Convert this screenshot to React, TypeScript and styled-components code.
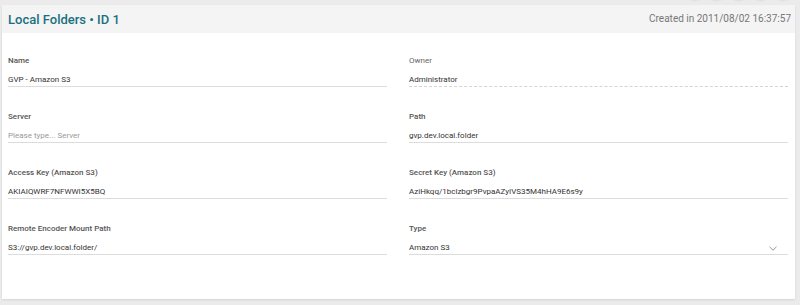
import { FC } from 'react'
import styled, { createGlobalStyle } from 'styled-components'

const GlobalStyle = createGlobalStyle`
  html, body {
    margin: 0;
    padding: 0;
    background: #ebebeb;
    font-family: Roboto, "Liberation Sans", sans-serif;
  }
`

type Field = {
  label: string
  value: string
  readOnly?: boolean
  placeholder?: boolean
  select?: boolean
}

const fields: Field[] = [
  { label: 'Name', value: 'GVP - Amazon S3' },
  { label: 'Owner', value: 'Administrator', readOnly: true },
  { label: 'Server', value: 'Please type... Server', placeholder: true },
  { label: 'Path', value: 'gvp.dev.local.folder' },
  { label: 'Access Key (Amazon S3)', value: 'AKIAIQWRF7NFWWI5X5BQ' },
  { label: 'Secret Key (Amazon S3)', value: 'AziHkqq/1bclzbgr9PvpaAZyIVS35M4hHA9E6s9y' },
  { label: 'Remote Encoder Mount Path', value: 'S3://gvp.dev.local.folder/' },
  { label: 'Type', value: 'Amazon S3', select: true },
]

const Chevron: FC = () => (
  <svg width="8" height="5" viewBox="0 0 8 5" fill="none">
    <path d="M0.5 0.8l3.5 3.4 3.5-3.4" stroke="#8a8a8a" strokeWidth="0.9" />
  </svg>
)

const App: FC = () => (
  <>
    <GlobalStyle />
    <StylePage>
      <StyleFabRow>
        {[0, 1, 2, 3, 4].map((i) => (
          <StyleFab key={i} />
        ))}
      </StyleFabRow>
      <StyleCard>
        <StyleHeader>
          <StyleTitle>{'Local Folders • ID 1'}</StyleTitle>
          <StyleCreated>{'Created in 2011/08/02 16:37:57'}</StyleCreated>
        </StyleHeader>
        <StyleGrid>
          {fields.map((f) => (
            <StyleField key={f.label}>
              <StyleLabel $readOnly={f.readOnly}>{f.label}</StyleLabel>
              <StyleValueRow $readOnly={f.readOnly}>
                <StyleValue $placeholder={f.placeholder}>{f.value}</StyleValue>
                {f.select && <Chevron />}
              </StyleValueRow>
            </StyleField>
          ))}
        </StyleGrid>
      </StyleCard>
    </StylePage>
  </>
)

export default App

const StylePage = styled.div`
  position: relative;
  width: 800px;
  height: 305px;
  padding: 5px 5px 0 2px;
  box-sizing: border-box;
  overflow: hidden;
`

const StyleFabRow = styled.div`
  position: absolute;
  top: -20px;
  right: 8px;
  display: flex;
  gap: 3px;
`

const StyleFab = styled.div`
  width: 19px;
  height: 19px;
  border-radius: 50%;
  background: #ebebeb;
  box-shadow: 0 1px 3px rgba(0, 0, 0, 0.14);
`

const StyleCard = styled.div`
  width: 793px;
  height: 294px;
  background: #fff;
  box-shadow: 0 1px 2px rgba(0, 0, 0, 0.1);
`

const StyleHeader = styled.div`
  display: flex;
  justify-content: space-between;
  align-items: center;
  height: 28px;
  padding: 0 4px 0 6px;
  background: #f4f4f4;
`

const StyleTitle = styled.h1`
  margin: 0;
  font-size: 13px;
  font-weight: 500;
  color: #1a7080;
`

const StyleCreated = styled.span`
  font-size: 10px;
  color: #777;
  padding-bottom: 2px;
`

const StyleGrid = styled.div`
  display: grid;
  grid-template-columns: 379px 379px;
  column-gap: 22px;
  row-gap: 25px;
  padding: 23px 7px 0 6px;
`

const StyleField = styled.div`
  display: flex;
  flex-direction: column;
  gap: 9px;
`

const StyleLabel = styled.label<{ $readOnly?: boolean }>`
  font-size: 8px;
  line-height: 10px;
  font-weight: ${(p) => (p.$readOnly ? 400 : 500)};
  color: ${(p) => (p.$readOnly ? '#666' : '#555')};
`

const StyleValueRow = styled.div<{ $readOnly?: boolean }>`
  display: flex;
  justify-content: space-between;
  align-items: center;
  padding: 0 11px 1px 0;
  border-bottom: 1px ${(p) => (p.$readOnly ? 'dashed #d4d4d4' : 'solid #dcdcdc')};
`

const StyleValue = styled.span<{ $placeholder?: boolean }>`
  font-size: 8px;
  line-height: 10px;
  color: ${(p) => (p.$placeholder ? '#9a9a9a' : '#333')};
`
